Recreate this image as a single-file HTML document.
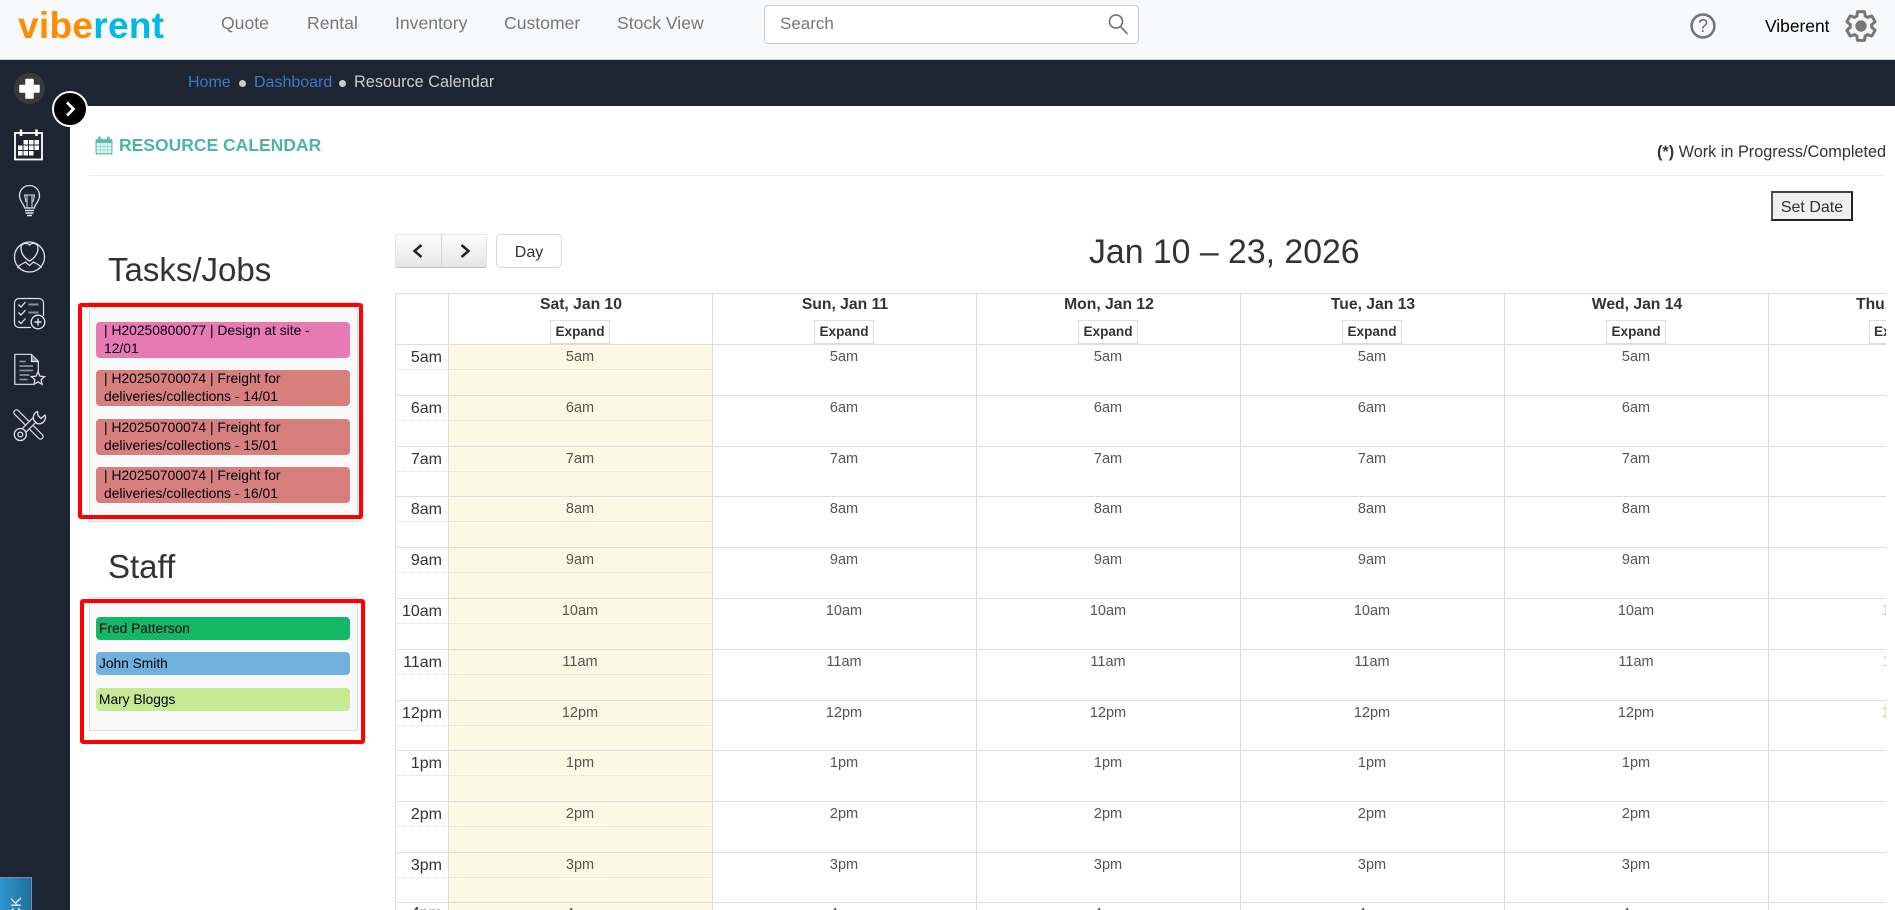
<!DOCTYPE html>
<html><head><meta charset="utf-8"><title>Resource Calendar</title>
<style>
*{box-sizing:border-box}
html,body{margin:0;padding:0;width:1895px;height:910px;overflow:hidden;background:#fff;font-family:"Liberation Sans",sans-serif;color:#333}
.a{position:absolute;white-space:nowrap}
.nav{top:12px;font-size:17.6px;line-height:22px;color:#777}
.h{background:#ddd;height:1px;left:0;right:0;position:absolute}
.d{position:absolute;left:0;width:317px;height:0;border-top:1px dotted #d8d8d8}
.v{background:#ddd;width:1px;top:0;bottom:0;position:absolute}
.th{position:absolute;top:2px;width:264px;text-align:center;font-weight:bold;font-size:15.7px;line-height:20px;color:#333}
.ex{position:absolute;top:27px;width:60px;height:24px;border:1px solid #ddd;background:#fff;text-align:center;font-weight:bold;font-size:13.6px;line-height:22px;color:#333}
.col{position:absolute;top:51px;width:264px;height:566px;overflow:hidden;text-align:center;font-size:14.5px;color:#555}
.col div{height:50.8px;width:264px;line-height:20px;padding-top:3px}
.tc{position:absolute;top:51px;left:0;width:47px;height:566px;overflow:hidden;text-align:right;font-size:16px;color:#333}
.tc div{height:50.8px;line-height:20px;padding:4px 0 0 0;white-space:nowrap}
.col div:last-child,.tc div:last-child{height:7px;overflow:hidden;padding-top:1px}
.item{position:absolute;left:96px;width:254px;border-radius:4px;color:#001;white-space:normal}
.job{height:36px;line-height:18px;padding:0 8px;margin:0;font-size:13.85px}
.job span{display:block;position:relative;top:-1px}
.staff{height:23px;line-height:23px;padding-left:3px;font-size:13.75px}
.red{position:absolute;border:4px solid #f00;border-radius:3px}
.panel{position:absolute;left:89px;width:269px;background:#f9f9f9;border:1px solid #ddd}
.hd{font-size:33px;line-height:40px;color:#333}
</style></head><body>

<!-- top bar -->
<div class="a" style="left:0;top:0;width:1895px;height:60px;background:#f8f9fb;border-bottom:1px solid #d5d5d5"></div>
<div class="a" style="left:18px;top:4px;font-size:37px;line-height:44px;font-weight:bold;letter-spacing:.3px;color:#ff8c00">vibe<span style="color:#00b9e4">rent</span></div>
<div class="a nav" style="left:221px">Quote</div>
<div class="a nav" style="left:307px">Rental</div>
<div class="a nav" style="left:395px">Inventory</div>
<div class="a nav" style="left:504px">Customer</div>
<div class="a nav" style="left:617px">Stock View</div>
<div class="a" style="left:764px;top:5px;width:375px;height:39px;background:#fff;border:1px solid #ccc;border-radius:4px"></div>
<div class="a" style="left:780px;top:13px;font-size:17px;line-height:22px;color:#777">Search</div>
<svg class="a" style="left:1107px;top:13px" width="22" height="22" viewBox="0 0 22 22" fill="none" stroke="#777" stroke-width="1.700"><circle cx="9" cy="8.500" r="6.500"/><path d="M13.500 13.500l7 7.500"/></svg>
<svg class="a" style="left:1689px;top:12px" width="28" height="28" viewBox="0 0 28 28" fill="none" stroke="#777" stroke-width="2.600"><circle cx="14" cy="14" r="11.400"/></svg>
<div class="a" style="left:1689px;top:15px;width:28px;text-align:center;font-size:18px;line-height:22px;color:#666">?</div>
<div class="a" style="left:1765px;top:15px;font-size:17.400px;line-height:22px;color:#000">Viberent</div>
<svg class="a" style="left:1843px;top:8px" width="36" height="36" viewBox="0 0 24 24" fill="#777"><path fill="none" stroke="#777" stroke-width="2" d="M19.140 12.940c.04-.3.06-.61.06-.94 0-.32-.02-.64-.07-.94l2.030-1.580c.18-.14.23-.41.12-.61l-1.920-3.320c-.12-.22-.37-.29-.59-.22l-2.390.96c-.5-.38-1.030-.7-1.620-.94l-.36-2.540c-.04-.24-.24-.41-.48-.41h-3.840c-.24 0-.43.17-.47.41l-.36 2.540c-.59.24-1.130.57-1.620.94l-2.390-.96c-.22-.08-.47 0-.59.22L2.740 8.870c-.12.21-.08.47.12.61l2.030 1.580c-.05.3-.09.63-.09.94s.02.64.07.94l-2.030 1.580c-.18.14-.23.41-.12.61l1.920 3.320c.12.22.37.29.59.22l2.390-.96c.5.38 1.030.7 1.620.94l.36 2.540c.05.24.24.41.48.41h3.840c.24 0 .44-.17.47-.41l.36-2.540c.59-.24 1.130-.56 1.620-.94l2.390.96c.22.08.47 0 .59-.22l1.920-3.320c.12-.22.07-.47-.12-.61l-2.010-1.580z"/><circle cx="12" cy="12" r="3.800"/></svg>

<!-- dark bar + sidebar -->
<div class="a" style="left:0;top:60px;width:1895px;height:46px;background:#1e2532"></div>
<div class="a" style="left:0;top:60px;width:70px;height:850px;background:#1e2532"></div>
<div class="a" style="left:188px;top:73px;font-size:16px;line-height:20px;color:#3a7cc4">Home</div>
<div class="a" style="left:239px;top:80px;width:7px;height:7px;border-radius:50%;background:#ccc"></div>
<div class="a" style="left:254px;top:73px;font-size:16px;line-height:20px;color:#3a7cc4">Dashboard</div>
<div class="a" style="left:339px;top:80px;width:7px;height:7px;border-radius:50%;background:#ccc"></div>
<div class="a" style="left:354px;top:72px;font-size:16.300px;line-height:20px;color:#ccc">Resource Calendar</div>

<!-- sidebar icons -->
<svg class="a" style="left:0;top:0" width="70" height="450" viewBox="0 0 70 450" fill="none" stroke="#dfe1e5" stroke-width="1.300">
<circle cx="29.500" cy="88.500" r="15.500" fill="#3a3a3c" stroke="none"/>
<path d="M26 79.500h7v6h6v6.500h-6v6h-7v-6h-6v-6.500h6z" fill="#fff" stroke="#fff" stroke-width="1.500" stroke-linejoin="round"/>
<!-- calendar -->
<rect x="15" y="133" width="27" height="26.500" stroke="#fff" stroke-width="1.800"/>
<path d="M21 129.500v6.500M36.500 129.500v6.500" stroke="#fff" stroke-width="2.600"/>
<g fill="#fff" stroke="none">
<rect x="23.500" y="140" width="4.500" height="4.500"/><rect x="29" y="140" width="4.500" height="4.500"/><rect x="34.500" y="140" width="4.500" height="4.500"/>
<rect x="18" y="145.500" width="4.500" height="4.500"/><rect x="23.500" y="145.500" width="4.500" height="4.500"/><rect x="29" y="145.500" width="4.500" height="4.500"/><rect x="34.500" y="145.500" width="4.500" height="4.500"/>
<rect x="18" y="151" width="4.500" height="4.500"/><rect x="23.500" y="151" width="4.500" height="4.500"/><rect x="29" y="151" width="4.500" height="4.500"/>
</g>
<!-- bulb -->
<path d="M24.500 208c0-4-5-6-5-12.500a10 10 0 0 1 20 0c0 6.500-5 8.500-5 12.500z"/>
<path d="M26 202l-1.500-7h10l-1.500 7M27 195v13M32 195v13" stroke-width="1"/>
<path d="M25 210.500h9M25.500 213h8" stroke-width="1.500"/><path d="M27 215.500h5" stroke-width="1.500"/>
<!-- person -->
<circle cx="29.500" cy="257" r="15"/>
<path d="M29.500 245c2-2.500 8.500-2.500 8.500 3 0 5-3 10-8.500 13-5.500-3-8.500-8-8.500-13 0-5.500 6.500-5.500 8.500-3z"/>
<path d="M17.500 268c1-3 5-4 8-6l4 3.500 4-3.500c3 2 7 3 8 6" stroke-width="1.200"/>
<!-- checklist -->
<path d="M31 327.500H19a4.500 4.500 0 0 1-4.500-4.500v-20a4.500 4.500 0 0 1 4.500-4.500h20a4.500 4.500 0 0 1 4.500 4.500v13" stroke-width="1.200"/>
<path d="M18.500 304.500l2.500 2.500 4.500-5M18.500 312.500l2.500 2.500 4.500-5M18.500 321l2.500 2.500 4.500-5" stroke-width="1.300"/>
<path d="M28.500 304.500h10M28.500 312.500h10" stroke="#8a8f99" stroke-width="2"/>
<circle cx="38" cy="322" r="6.800" fill="#1e2532" stroke-width="1.400"/>
<path d="M34.500 322h7M38 318.500v7" stroke-width="1.400"/>
<!-- doc star -->
<path d="M33 384.300H14.800V354.300h16.500l7 7v11" stroke-width="1.200"/>
<path d="M31.500 354.500v7h6.500" stroke-width="1.200" fill="#8a8f99"/>
<path d="M19.500 361.500h6M19.500 366h13.500M19.500 370.500h13.500M19.500 375h10M19.500 379.500h8" stroke="#8a8f99" stroke-width="1.800"/>
<path d="M38 371.800l1.900 4.300 4.700.5-3.500 3.100 1 4.600-4.100-2.400-4.100 2.400 1-4.600-3.500-3.100 4.700-.5z" fill="#1e2532" stroke-width="1.300"/>
<!-- tools -->
<path d="M16.500 412.500l24 24" stroke="#d5d7dc" stroke-width="6.500" stroke-linecap="round"/>
<path d="M16.500 412.500l24 24" stroke="#1e2532" stroke-width="4" stroke-linecap="round"/>
<path d="M23 431.500l14-14" stroke="#d5d7dc" stroke-width="6.500"/>
<path d="M22 432.500l16-16" stroke="#1e2532" stroke-width="4"/>
<circle cx="20.300" cy="434.500" r="6" fill="#1e2532"/><circle cx="20.300" cy="434.500" r="2.400"/>
<path d="M37.500 411.500a6.500 6.500 0 0 0-3.500 9l3 3a6.500 6.500 0 0 0 8-8.500l-4 3.500-3-3z" fill="#1e2532" stroke-width="1.300" stroke-linejoin="round"/>
</svg>

<!-- chevron toggle -->
<div class="a" style="left:52px;top:91px;width:36px;height:36px;border-radius:50%;background:#000;border:2px solid #fff"></div>
<svg class="a" style="left:60px;top:99px" width="20" height="20" viewBox="0 0 20 20" fill="none" stroke="#fff" stroke-width="2.800"><path d="M7 3.500l6.500 6.500-6.500 6.500"/></svg>

<!-- feedback tab -->
<div class="a" style="left:0;top:877px;width:32px;height:33px;overflow:hidden;background:linear-gradient(90deg,#2f96cf,#1e6e9f);border:1px solid #7f8b99;border-left:0;border-bottom:0">
  <svg style="position:absolute;left:0;top:0" width="31" height="32" viewBox="0 0 31 32"><text transform="translate(21,100) rotate(-90)" font-family="Liberation Sans, sans-serif" font-size="15" fill="#e8f2f8">FEEDBACK</text></svg>
</div>

<!-- title -->
<svg class="a" style="left:95px;top:136px" width="18" height="19" viewBox="0 0 18 19"><rect x=".5" y="3" width="17" height="15.500" rx="1.500" fill="#5dbdb0"/><rect x="3" y=".5" width="2.800" height="5" rx="1" fill="#5dbdb0"/><rect x="12" y=".5" width="2.800" height="5" rx="1" fill="#5dbdb0"/><rect x="1.700" y="7" width="14.600" height="10.300" fill="#e2f4f1"/><path d="M5.500 7v10.300M9 7v10.300M12.500 7v10.300M1.700 10.400h14.600M1.700 13.800h14.600" stroke="#7fcbc0" stroke-width=".6"/></svg>
<div class="a" style="left:119px;top:134px;font-size:17.500px;line-height:22px;font-weight:bold;color:#4fb5a3">RESOURCE CALENDAR</div>
<div class="a" style="left:1657px;top:142px;font-size:16.250px;line-height:20px;color:#333"><b>(*)</b> Work in Progress/Completed</div>
<div class="a" style="left:89px;top:175px;width:1796px;height:1px;background:#eee"></div>
<div class="a" style="left:1771px;top:191px;width:82px;height:30px;background:#efefef;border:2px solid #222;border-top-color:#444;border-left-color:#555;text-align:center;font-size:16px;line-height:29px;color:#333">Set Date</div>

<!-- left panels -->
<div class="a hd" style="left:108px;top:250px">Tasks/Jobs</div>
<div class="panel" style="top:302px;height:220px"></div>
<div class="item job" style="top:322px;background:#e87ab3"><span>| H20250800077 | Design at site - 12/01</span></div>
<div class="item job" style="top:370px;background:#d67f7c"><span>| H20250700074 | Freight for deliveries/collections - 14/01</span></div>
<div class="item job" style="top:419px;background:#d67f7c"><span>| H20250700074 | Freight for deliveries/collections - 15/01</span></div>
<div class="item job" style="top:467px;background:#d67f7c"><span>| H20250700074 | Freight for deliveries/collections - 16/01</span></div>
<div class="red" style="left:78px;top:303px;width:285px;height:216px"></div>

<div class="a hd" style="left:108px;top:547px">Staff</div>
<div class="panel" style="top:597px;height:134px"></div>
<div class="item staff" style="top:617px;background:#13b865">Fred Patterson</div>
<div class="item staff" style="top:652px;background:#6fb0dc">John Smith</div>
<div class="item staff" style="top:688px;background:#c5ea94">Mary Bloggs</div>
<div class="red" style="left:80px;top:599px;width:285px;height:145px"></div>

<!-- toolbar -->
<div class="a" style="left:395px;top:234px;width:92px;height:34px;background:linear-gradient(#fdfdfd,#e6e6e6);border:1px solid #e6e6e6;border-bottom-color:#bfbfbf;border-radius:2px"></div>
<div class="a" style="left:441px;top:234px;width:1px;height:34px;background:#d5d5d5"></div>
<svg class="a" style="left:395px;top:234px" width="92" height="34" viewBox="0 0 92 34" fill="none" stroke="#222" stroke-width="2.500"><path d="M26.500 11L19.500 17l7 6M66.500 11l7 6-7 6"/></svg>
<div class="a" style="left:496px;top:234px;width:66px;height:34px;background:#fff;border:1px solid #d5d5d5;border-radius:5px;text-align:center;font-size:16px;line-height:35px;color:#333">Day</div>
<div class="a" style="left:1089px;top:232px;font-size:33.800px;line-height:40px;color:#333">Jan 10 – 23, 2026</div>

<!-- calendar -->
<div class="a" style="left:395px;top:293px;width:1491px;height:617px;overflow:hidden;background:#fff;white-space:normal">
  <div class="a" style="left:54px;top:51px;width:263px;height:566px;background:#fcf8e3"></div>
  <div class="h" style="top:0"></div><div class="h" style="top:51px"></div>
  <div class="h" style="top:102px"></div><div class="h" style="top:153px"></div><div class="h" style="top:203px"></div><div class="h" style="top:254px"></div><div class="h" style="top:305px"></div><div class="h" style="top:356px"></div><div class="h" style="top:407px"></div><div class="h" style="top:457px"></div><div class="h" style="top:508px"></div><div class="h" style="top:559px"></div><div class="h" style="top:609px"></div>
  <div class="d" style="top:76px"></div><div class="d" style="top:127px"></div><div class="d" style="top:178px"></div><div class="d" style="top:228px"></div><div class="d" style="top:279px"></div><div class="d" style="top:330px"></div><div class="d" style="top:381px"></div><div class="d" style="top:432px"></div><div class="d" style="top:482px"></div><div class="d" style="top:533px"></div><div class="d" style="top:584px"></div>
  <div class="v" style="left:0"></div><div class="v" style="left:53px"></div><div class="v" style="left:317px"></div><div class="v" style="left:581px"></div><div class="v" style="left:845px"></div><div class="v" style="left:1109px"></div><div class="v" style="left:1373px"></div>

  <div class="th" style="left:54px">Sat, Jan 10</div><div class="ex" style="left:155px">Expand</div>
  <div class="th" style="left:318px">Sun, Jan 11</div><div class="ex" style="left:419px">Expand</div>
  <div class="th" style="left:582px">Mon, Jan 12</div><div class="ex" style="left:683px">Expand</div>
  <div class="th" style="left:846px">Tue, Jan 13</div><div class="ex" style="left:947px">Expand</div>
  <div class="th" style="left:1110px">Wed, Jan 14</div><div class="ex" style="left:1211px">Expand</div>
  <div class="th" style="left:1372px;width:119px;overflow:hidden;text-align:left;white-space:nowrap;padding-left:89px">Thu, Jan 15</div>
  <div class="ex" style="left:1474px;width:17px;border-right:0;text-align:left;padding-left:4px;overflow:hidden;white-space:nowrap">Expand</div>

  <div class="tc"><div>5am</div><div>6am</div><div>7am</div><div>8am</div><div>9am</div><div>10am</div><div>11am</div><div>12pm</div><div>1pm</div><div>2pm</div><div>3pm</div><div>4pm</div></div>
  <div class="col" style="left:53px"><div>5am</div><div>6am</div><div>7am</div><div>8am</div><div>9am</div><div>10am</div><div>11am</div><div>12pm</div><div>1pm</div><div>2pm</div><div>3pm</div><div>4pm</div></div>
  <div class="col" style="left:317px"><div>5am</div><div>6am</div><div>7am</div><div>8am</div><div>9am</div><div>10am</div><div>11am</div><div>12pm</div><div>1pm</div><div>2pm</div><div>3pm</div><div>4pm</div></div>
  <div class="col" style="left:581px"><div>5am</div><div>6am</div><div>7am</div><div>8am</div><div>9am</div><div>10am</div><div>11am</div><div>12pm</div><div>1pm</div><div>2pm</div><div>3pm</div><div>4pm</div></div>
  <div class="col" style="left:845px"><div>5am</div><div>6am</div><div>7am</div><div>8am</div><div>9am</div><div>10am</div><div>11am</div><div>12pm</div><div>1pm</div><div>2pm</div><div>3pm</div><div>4pm</div></div>
  <div class="col" style="left:1109px"><div>5am</div><div>6am</div><div>7am</div><div>8am</div><div>9am</div><div>10am</div><div>11am</div><div>12pm</div><div>1pm</div><div>2pm</div><div>3pm</div><div>4pm</div></div>
  <div class="col" style="left:1373px;width:118px;color:#d8c090"><div>5am</div><div>6am</div><div>7am</div><div>8am</div><div>9am</div><div>10am</div><div>11am</div><div>12pm</div><div>1pm</div><div>2pm</div><div>3pm</div><div>4pm</div></div>
</div>
</body></html>
